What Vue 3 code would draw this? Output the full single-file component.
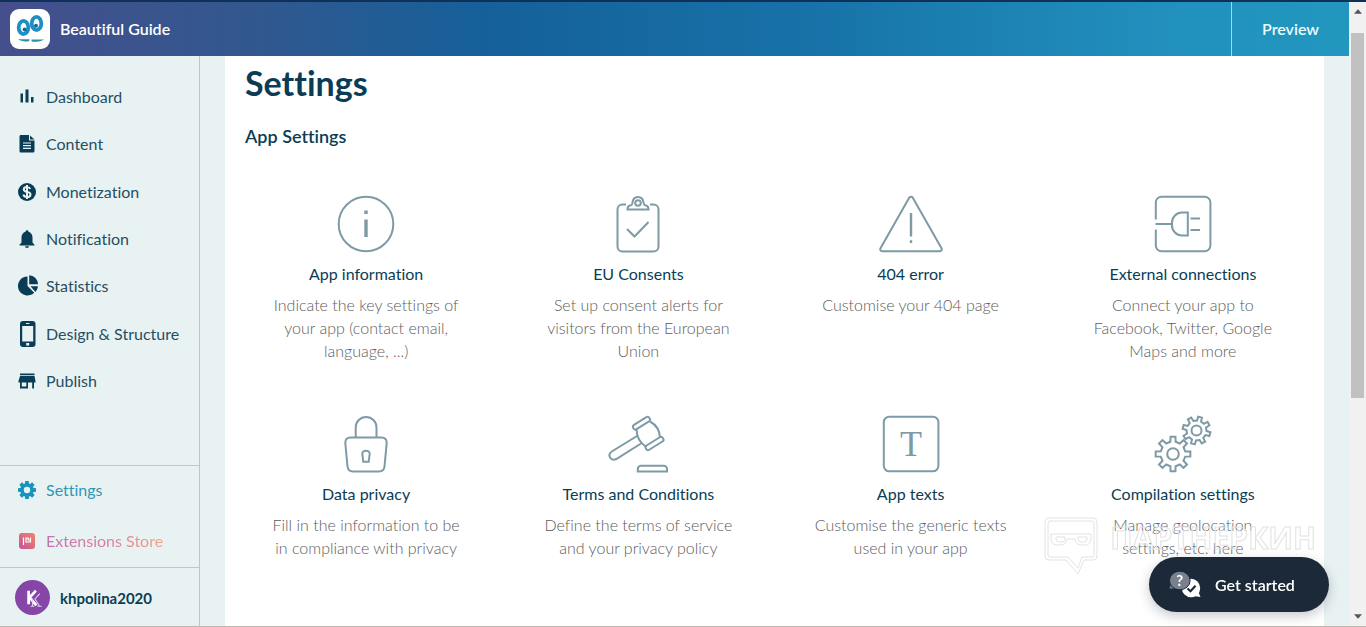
<script setup>
const nav = [
  { id: 'dashboard', label: 'Dashboard' },
  { id: 'content', label: 'Content' },
  { id: 'money', label: 'Monetization' },
  { id: 'bell', label: 'Notification' },
  { id: 'pie', label: 'Statistics' },
  { id: 'phone', label: 'Design & Structure' },
  { id: 'shop', label: 'Publish' },
]

const cards = [
  { id: 'info', title: 'App information', text: 'Indicate the key settings of your app (contact email, language, ...)' },
  { id: 'consent', title: 'EU Consents', text: 'Set up consent alerts for visitors from the European Union' },
  { id: 'error', title: '404 error', text: 'Customise your 404 page' },
  { id: 'plug', title: 'External connections', text: 'Connect your app to Facebook, Twitter, Google Maps and more' },
  { id: 'lock', title: 'Data privacy', text: 'Fill in the information to be in compliance with privacy' },
  { id: 'gavel', title: 'Terms and Conditions', text: 'Define the terms of service and your privacy policy' },
  { id: 'text', title: 'App texts', text: 'Customise the generic texts used in your app' },
  { id: 'gears', title: 'Compilation settings', text: 'Manage geolocation settings, etc. here' },
]

// Closed outline of a cog with eight tapered teeth
function gear(cx, cy, outer, root, turn = 0, wide = 0.21, tip = 0.14) {
  const pts = []
  for (let i = 0; i < 8; i++) {
    const a = (i * Math.PI) / 4 + turn
    for (const [d, r] of [[-wide, root], [-tip, outer], [tip, outer], [wide, root]]) {
      pts.push(`${(cx + r * Math.cos(a + d)).toFixed(2)} ${(cy + r * Math.sin(a + d)).toFixed(2)}`)
    }
  }
  return `M${pts.join('L')}Z`
}
const bigGear = gear(23, 39, 17.5, 12.5)
const smallGear = gear(46.5, 15.5, 14, 10, 0.26)
const navGear = gear(10, 10, 9.2, 6.8, 0, 0.3, 0.2)
</script>

<template>
  <div class="frame">
    <div class="page">
      <header class="topbar">
        <a class="brand" href="#">
          <svg class="logo" viewBox="0 0 40 40" aria-hidden="true">
            <rect width="40" height="40" rx="9" fill="#fff" />
            <g fill="#fff" stroke="#1e8fc6" stroke-width="3.8">
              <ellipse cx="13.500" cy="18.500" rx="4.800" ry="6.600" />
              <ellipse cx="26.500" cy="14.500" rx="4.800" ry="6.600" />
            </g>
            <circle cx="14.600" cy="20.600" r="2" fill="#176a94" />
            <circle cx="26" cy="16.800" r="2" fill="#176a94" />
            <path d="M8 30.200h11.500v1.300l-1.500 1c-4 0-8-.8-10-2.300Z" fill="#2a8fa8" />
            <path d="M21.500 30.400h12.500c-2 1.600-7 2.500-11.500 2.300l-1-.8Z" fill="#2a8fa8" />
          </svg>
          <span>Beautiful Guide</span>
        </a>
        <button class="preview" type="button">Preview</button>
      </header>

      <div class="body">
        <aside class="sidebar">
          <nav class="menu" aria-label="Main">
            <a v-for="n in nav" :key="n.id" class="item" href="#">
              <svg class="glyph" viewBox="0 0 22 28" aria-hidden="true">
                <g v-if="n.id === 'dashboard'">
                  <path d="M4.500 10.500h2.500v9h-2.500zM9.500 6.500h3v13h-3zM15 14h2.500v5.500h-2.500z" />
                </g>
                <g v-else-if="n.id === 'content'">
                  <path d="M4.500 5h8.500v5.500h5.500V21a1.500 1.500 0 0 1-1.500 1.500H4.500A1.500 1.500 0 0 1 3.500 21V6.500A1.500 1.500 0 0 1 4.500 5Z" />
                  <path d="M14 5.500l4.500 4h-4.500z" />
                  <path d="M7 13h8M7 15.700h8M7 18.400h8" class="cut" />
                </g>
                <g v-else-if="n.id === 'money'">
                  <circle cx="11" cy="14" r="9" />
                  <path d="M14.200 11c-.6-1.500-1.800-2-3.200-2-1.900 0-3.200.9-3.200 2.400 0 3.400 6.700 1.600 6.700 5 0 1.600-1.500 2.600-3.500 2.600-1.800 0-3.200-.8-3.600-2.500M11 7v14" class="cut thick" />
                </g>
                <g v-else-if="n.id === 'bell'">
                  <path d="M11 5.200c.9 0 1.500.7 1.500 1.500 2.600.8 4 3 4 5.800v5l2 2.200v.8H3.500v-.8l2-2.200v-5c0-2.800 1.400-5 4-5.800 0-.8.6-1.500 1.500-1.500ZM9 21.300h4a2 1.700 0 0 1-4 0Z" />
                </g>
                <g v-else-if="n.id === 'pie'">
                  <path d="M11.500 14V4.500A9.500 9.500 0 1 0 18.200 20.700Z" />
                  <path d="M13.200 12.200V3.200a9 9 0 0 1 8.800 9ZM14.500 14.300H22a9 9 0 0 1-2.600 5.700Z" />
                </g>
                <g v-else-if="n.id === 'phone'">
                  <rect x="4" y="1" width="15.500" height="26" rx="3" />
                  <rect x="6.200" y="6" width="11" height="15.500" class="hole" />
                  <rect x="10.200" y="23" width="3" height="2.600" class="hole" />
                  <path d="M10 3.500h3.500" class="cut thin" />
                </g>
                <g v-else>
                  <path d="M4 6.500h14.500v1.800H4zM4 9h14.500l1 5v1.500H18V21.500h-1.800v-6h-4.200v6H4v-6H2.500V14Zm1.800 6.500v4h4.500v-4Z" fill-rule="evenodd" />
                </g>
              </svg>
              <span>{{ n.label }}</span>
            </a>
          </nav>

          <nav class="extra" aria-label="Configuration">
            <a class="item active" href="#">
              <svg class="glyph" viewBox="-1 -4 22 28" aria-hidden="true">
                <path :d="navGear" />
                <circle cx="10" cy="10" r="3.200" class="hole" />
              </svg>
              <span>Settings</span>
            </a>
            <a class="item store" href="#">
              <svg class="glyph" viewBox="0 0 22 28" aria-hidden="true">
                <defs>
                  <linearGradient id="storeFill" x1="0" y1="1" x2="1" y2="0">
                    <stop offset="0" stop-color="#c4549b" />
                    <stop offset="1" stop-color="#f08467" />
                  </linearGradient>
                </defs>
                <rect x="3" y="6" width="16" height="16" rx="3" fill="url(#storeFill)" />
                <path d="M7.500 10.500v7.500M10 10.500v4.500h4.500v-4.500M10 11h2.200v2h1.800" fill="none" stroke="#fff" stroke-width="1.200" />
              </svg>
              <span>Extensions Store</span>
            </a>
          </nav>

          <a class="user" href="#">
            <svg class="avatar" viewBox="0 0 36 36" aria-hidden="true">
              <circle cx="18" cy="18" r="18" fill="#8546a8" />
              <path d="M14 11v14M21.500 11l-6.500 7 7 8" fill="none" stroke="#fff" stroke-width="2.800" />
              <path d="M25.500 14l-5 5.500 4.500 7M18 19v8M16 27h4M23 27h4.500" fill="none" stroke="#e3d0ee" stroke-width="1.100" />
            </svg>
            <span>khpolina2020</span>
          </a>
        </aside>

        <main class="content">
          <h1>Settings</h1>
          <h2>App Settings</h2>
          <div class="cards">
            <a v-for="c in cards" :key="c.id" class="card" href="#">
              <svg class="picto" viewBox="0 0 66 58" aria-hidden="true">
                <g v-if="c.id === 'info'">
                  <circle cx="33" cy="29" r="27.300" />
                  <path d="M33 24.500v17.500M33 15.500v3.500" stroke-width="3.400" />
                </g>
                <g v-else-if="c.id === 'consent'">
                  <path d="M21 9.500h-3.500a5 5 0 0 0-5 5v37a5 5 0 0 0 5 5h31a5 5 0 0 0 5-5v-37a5 5 0 0 0-5-5h-3.500" />
                  <path d="M22.500 14.500c0-2.500 1.500-4 3.500-4.200 1-.3 1.300-1 1.500-2.800.5-3.500 2.600-5.500 5.500-5.500s5 2 5.500 5.500c.2 1.800.5 2.500 1.500 2.800 2 .2 3.500 1.700 3.500 4.200Z" />
                  <circle cx="33" cy="8" r="2.800" />
                  <path d="M22 34l7.500 7.500L43.500 27" />
                </g>
                <g v-else-if="c.id === 'error'">
                  <path d="M31.200 2.700L2.500 53.300c-.8 1.500 0 2.900 1.600 2.900h57.800c1.600 0 2.400-1.400 1.600-2.900L34.800 2.700c-.8-1.300-2.800-1.300-3.600 0Z" />
                  <path d="M33 18v23.500M33 45.200v2.800" stroke-width="2.400" />
                </g>
                <g v-else-if="c.id === 'plug'">
                  <path d="M5.800 24.500V7.500a5.800 5.800 0 0 1 5.800-5.800h43a5.800 5.800 0 0 1 5.800 5.800v43a5.800 5.800 0 0 1-5.800 5.800h-43a5.800 5.800 0 0 1-5.800-5.800V34.500M5.500 29H22" />
                  <path d="M37.800 17.500h-5.800a10 10 0 0 0-10 10v3a10 10 0 0 0 10 10h5.800ZM40.500 23.400h9.500M40.500 35h9.500" />
                </g>
                <g v-else-if="c.id === 'lock'">
                  <path d="M17.500 22.500h31c3.500 0 5.500 2 5.200 5.500l-2.200 23.500c-.3 3-2.300 5-5.500 5H20c-3.200 0-5.200-2-5.500-5L12.300 28c-.3-3.500 1.700-5.500 5.200-5.500Z" />
                  <path d="M22.700 22.500V12.400a10.400 10.400 0 0 1 20.800 0v10.100M30.300 46.800l-1-8c-.4-4.200 7.800-4.200 7.400 0l-1 8Z" />
                </g>
                <g v-else-if="c.id === 'gavel'">
                  <path d="M32 21L6.800 36.500c-5 3.500-1 10 4.500 7.500L36 28.500" />
                  <rect x="-9.500" y="-2.500" width="19" height="5" rx="2.200" transform="translate(36.500 8.200) rotate(-32)" />
                  <rect x="-10" y="-2.500" width="20" height="5" rx="2.200" transform="translate(49.500 28.500) rotate(-32)" />
                  <path d="M31.500 14.500c.2 7.500 3.500 13.500 9.800 17.500M45 6.500c6.500 3.500 9.800 9 10 16.500" />
                  <path d="M32.800 56.500v-2.500a3.200 3.200 0 0 1 3.200-3.200h22.800a3.200 3.200 0 0 1 3.200 3.200v2.500Z" />
                </g>
                <g v-else-if="c.id === 'text'">
                  <rect x="5.800" y="1.700" width="54.600" height="54.600" rx="5.500" />
                  <text x="33" y="41" text-anchor="middle">T</text>
                </g>
                <g v-else>
                  <path :d="bigGear" />
                  <circle cx="23" cy="39" r="5.800" />
                  <path :d="smallGear" />
                  <circle cx="46.500" cy="15.500" r="5" />
                </g>
              </svg>
              <h3>{{ c.title }}</h3>
              <p>{{ c.text }}</p>
            </a>
          </div>
        </main>
      </div>
    </div>

    <div class="scroll" aria-hidden="true">
      <svg viewBox="0 0 9 5"><path d="M0 5L4.500 0L9 5Z" /></svg>
      <div class="track"><div class="thumb"></div></div>
      <svg viewBox="0 0 9 5"><path d="M0 0h9L4.500 5Z" /></svg>
    </div>

    <div class="watermark" aria-hidden="true">
      <svg viewBox="0 0 54 60">
        <path d="M5 2h44q4 0 4 4v34q0 4-4 4h-9L34 58 22 44H5q-4 0-4-4V6q0-4 4-4Z" />
        <path d="M6 5h42q2 0 2 2v32q0 2-2 2h-10l-4 11-10-11H6q-2 0-2-2V7q0-2 2-2Z" />
        <path d="M7 18h40v4q0 7-6 7h-4q-5 0-6-6h-8q-1 6-6 6h-4q-6 0-6-7ZM12 21h9v2q0 3-3 3h-3q-3 0-3-3ZM34 21h9v2q0 3-3 3h-3q-3 0-3-3Z" />
      </svg>
      <span>ПАРТНЕРКИН</span>
    </div>

    <button class="start" type="button">
      <svg viewBox="0 0 32 28" aria-hidden="true">
        <path d="M2 12.500l-1.500 5h9z" fill="#79818e" />
        <circle cx="22" cy="17" r="9.200" fill="#fff" />
        <path d="M24 25l7.500 1-2.500-6z" fill="#fff" />
        <ellipse cx="10.800" cy="9.500" rx="10.300" ry="9.300" fill="#79818e" stroke="#1c2938" />
        <path d="M18.500 17.500l3 2.800 5-5.500" fill="none" stroke="#1c2938" stroke-width="2.200" />
        <text x="10.800" y="15" text-anchor="middle">?</text>
      </svg>
      <span>Get started</span>
    </button>
  </div>
</template>

<style>
body {
  margin: 0;
}
</style>

<style scoped>
.frame {
  box-sizing: border-box;
  display: flex;
  min-height: 100vh;
  border-top: 2px solid #0f3158;
  border-bottom: 1px solid #bcb9b2;
  background: #fff;
  color: #0a3d55;
  font-family: Lato, "Open Sans", sans-serif;
  font-size: 16px;
  line-height: 24px;
  font-variant-ligatures: none;
}
a {
  color: inherit;
  text-decoration: none;
}
button {
  border: 0;
  font: inherit;
  cursor: pointer;
}
.page {
  flex: 1;
  display: flex;
  flex-direction: column;
  min-width: 0;
}
.topbar {
  display: flex;
  height: 54px;
  background: linear-gradient(90deg, #454f8c 0%, #30588f 20%, #15609a 36%, #1772a8 60%, #2190bd 86%, #2297be 100%);
  color: #fff;
}
.brand {
  flex: 1;
  display: flex;
  align-items: center;
  gap: 10px;
  padding-left: 10px;
  font-weight: 600;
}
.logo {
  width: 40px;
  height: 40px;
}
.preview {
  width: 118px;
  border-left: 1px solid #a9d6e8;
  background: none;
  color: #eafcff;
  font-weight: 600;
}
.body {
  flex: 1;
  display: flex;
  background: #e9f2f2;
}
.sidebar {
  box-sizing: border-box;
  width: 200px;
  flex: none;
  display: flex;
  flex-direction: column;
  border-right: 1px solid #b5cbd0;
}
.menu {
  flex: 1;
  display: flex;
  flex-direction: column;
  justify-content: space-between;
  padding: 29px 0 72px;
}
.item {
  display: flex;
  align-items: center;
  gap: 8px;
  height: 24px;
  padding-left: 16px;
  color: #264e63;
}
.glyph {
  width: 22px;
  height: 28px;
  fill: #0a3d55;
}
.cut {
  fill: none;
  stroke: #e9f2f2;
  stroke-width: 1.2;
}
.thick {
  stroke-width: 2;
}
.thin {
  stroke-width: 1;
}
.hole {
  fill: #e9f2f2;
}
.extra {
  display: flex;
  flex-direction: column;
  gap: 27px;
  padding: 12px 0 14px;
  border-top: 1px solid #b5cbd0;
}
.active {
  color: #3096b4;
}
.active .glyph {
  fill: #1793bd;
}
.store span {
  background: linear-gradient(90deg, #c271b0, #dd7d9b 55%, #eda487);
  background-clip: text;
  color: transparent;
}
.user {
  display: flex;
  align-items: center;
  gap: 10px;
  padding: 12px 15px 11px;
  border-top: 1px solid #b5cbd0;
  font-size: 15px;
  font-weight: 700;
}
.avatar {
  width: 35px;
  height: 35px;
}
.content {
  flex: 1;
  min-width: 0;
  margin: 0 25px;
  background: #fff;
}
h1 {
  margin: 6px 20px 0;
  font-size: 34px;
  line-height: 42px;
  font-weight: 700;
}
h2 {
  margin: 20px 20px 0;
  font-size: 18px;
  line-height: 24px;
  font-weight: 600;
}
.cards {
  display: grid;
  grid-template-columns: repeat(4, 1fr);
  row-gap: 53px;
  margin: 47px 5px 0;
}
.card {
  display: flex;
  flex-direction: column;
  align-items: center;
  padding: 0 40px;
  text-align: center;
}
.picto {
  width: 66px;
  height: 58px;
  flex: none;
  fill: none;
  stroke: #7e9aa6;
  stroke-width: 2;
}
.picto text {
  fill: #7e9aa6;
  stroke: none;
  font: 36px "Liberation Serif", serif;
}
h3 {
  margin: 9px 0 7px;
  font-size: 16px;
  line-height: 24px;
  font-weight: 400;
}
.card p {
  margin: 0;
  color: #5c5c5c;
  font-weight: 300;
  line-height: 23px;
}
.scroll {
  width: 17px;
  flex: none;
  display: flex;
  flex-direction: column;
  align-items: center;
  gap: 19px;
  box-sizing: border-box;
  padding: 7px 0;
  background: #f1f1f1;
}
.scroll svg {
  width: 8px;
  height: 5px;
  fill: #555;
}
.track {
  flex: 1;
  width: 13px;
}
.thumb {
  height: 65%;
  background: #c1c1c1;
}
.watermark {
  position: fixed;
  right: 50px;
  bottom: 51px;
  display: flex;
  align-items: flex-start;
  gap: 12px;
  font: 700 30px/44px "Open Sans", sans-serif;
  pointer-events: none;
}
.watermark svg {
  width: 54px;
  height: 60px;
  fill: none;
  stroke: #e2e2e2;
}
.watermark span {
  color: transparent;
  -webkit-text-stroke: 1px #e2e2e2;
}
.start {
  position: fixed;
  right: 37px;
  bottom: 15px;
  display: flex;
  align-items: center;
  gap: 14px;
  width: 180px;
  height: 55px;
  padding: 0 0 0 20px;
  border-radius: 28px;
  background: #1c2938;
  color: #fff;
  box-shadow: 0 4px 12px #1c293840;
  font-weight: 600;
}
.start svg {
  width: 32px;
  height: 28px;
}
.start text {
  fill: #fff;
  font: 700 15px Lato, sans-serif;
}
</style>
